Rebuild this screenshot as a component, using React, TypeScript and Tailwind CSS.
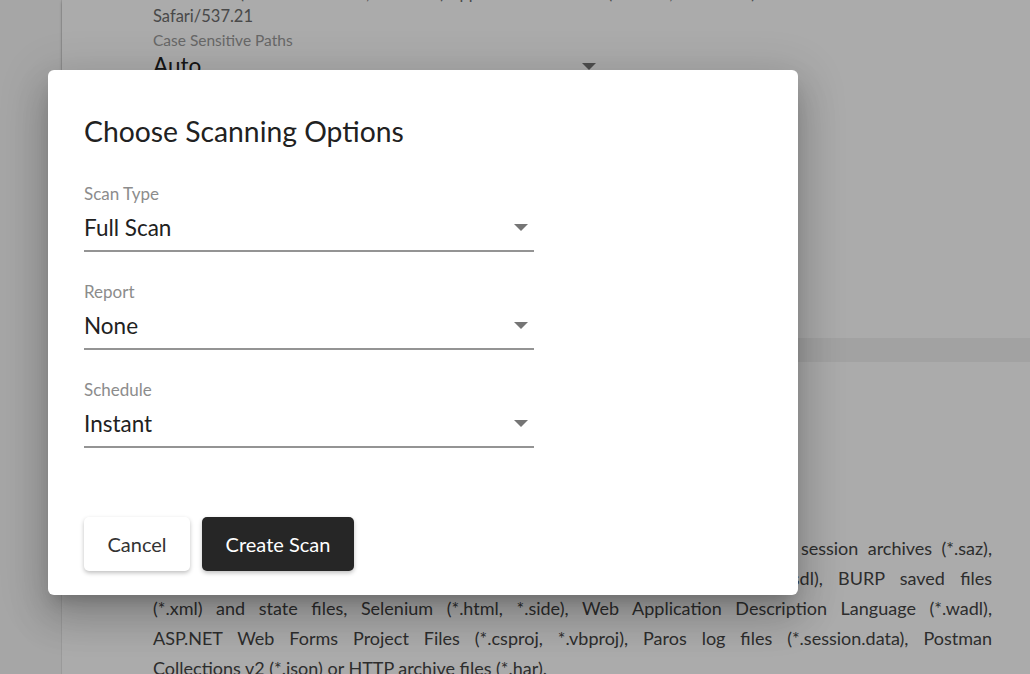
import React from 'react';

const font = { fontFamily: 'Lato, "Noto Sans", sans-serif' };

function SelectField({ label, value }: { label: string; value: string }) {
  return (
    <div className="w-[450px]">
      <div className="text-[17px] leading-[20px] text-[#8c8c8c]">{label}</div>
      <div className="mt-[2px] flex h-[46px] items-center justify-between border-b-2 border-[#949494] pr-[6px]">
        <span className="text-[22.5px] text-[#212121]">{value}</span>
        <svg width="14" height="7" viewBox="0 0 14 7" className="mb-[2px]">
          <path d="M0 0h14L7 7z" fill="#757575" />
        </svg>
      </div>
    </div>
  );
}

function JustLine({ children }: { children: React.ReactNode }) {
  return (
    <div className="whitespace-nowrap text-justify [text-align-last:justify]">{children}</div>
  );
}

export default function App() {
  return (
    <div className="relative h-[674px] w-[1030px] overflow-hidden bg-[#f8f8f8]" style={font}>
      {/* page behind the dialog */}
      <div className="flex h-full">
        <div className="w-[62px] shrink-0 border-r border-[#e6e6e6] bg-[#f8f8f8]" />
        <div className="flex flex-1 flex-col">
          <div className="h-[338px] shrink-0 bg-white pl-[91px] pr-[38px] shadow-[0_2px_3px_rgba(0,0,0,0.25)]">
            <div className="-mt-[18px] text-[16.5px] leading-[23px] text-[#6e6e6e]">
              <div className="whitespace-nowrap">
                Mozilla/5.0 (Windows NT 6.2; WOW64) AppleWebKit/537.21 (KHTML, like Gecko) Chrome/41.0.2228.0
              </div>
              <div>Safari/537.21</div>
            </div>
            <div className="mt-[3px] text-[15.5px] leading-[18px] text-[#9a9a9a]">Case Sensitive Paths</div>
            <div className="mt-[2px] flex h-[30px] w-[450px] items-center justify-between pr-[7px]">
              <span className="text-[22.5px] text-[#212121]">Auto</span>
              <svg width="14" height="7" viewBox="0 0 14 7">
                <path d="M0 0h14L7 7z" fill="#757575" />
              </svg>
            </div>
          </div>
          <div className="h-[24px] shrink-0 bg-[#f2f2f2]" />
          <div className="flex-1 bg-white pl-[91px] pr-[38px] pt-[171px] text-[18px] leading-[30px] text-[#444]">
            <JustLine>Supported formats: Swagger and OpenAPI definitions (*.json, *.yaml), Fiddler session archives (*.saz),</JustLine>
            <JustLine>Burp Suite exports (*.xml), Web Service Definition Language files (*.wsdl), BURP saved files</JustLine>
            <JustLine>(*.xml) and state files, Selenium (*.html, *.side), Web Application Description Language (*.wadl),</JustLine>
            <JustLine>ASP.NET Web Forms Project Files (*.csproj, *.vbproj), Paros log files (*.session.data), Postman</JustLine>
            <div className="whitespace-nowrap">Collections v2 (*.json) or HTTP archive files (*.har).</div>
          </div>
        </div>
      </div>

      {/* overlay + dialog */}
      <div className="absolute inset-0 bg-black/[0.33] pl-[48px] pt-[70px]">
        <div className="flex h-[525px] w-[750px] flex-col rounded-[6px] bg-white px-[36px] pt-[43px] shadow-[0_11px_15px_-7px_rgba(0,0,0,0.2),0_24px_38px_3px_rgba(0,0,0,0.14),0_9px_46px_8px_rgba(0,0,0,0.12)]">
          <h2 className="text-[28.3px] leading-[36px] text-[#212121]">Choose Scanning Options</h2>
          <div className="mt-[35px] flex flex-col gap-[30px]">
            <SelectField label="Scan Type" value="Full Scan" />
            <SelectField label="Report" value="None" />
            <SelectField label="Schedule" value="Instant" />
          </div>
          <div className="mt-[69px] flex gap-[12px]">
            <button className="h-[54px] w-[106px] rounded-[5px] bg-white text-[20px] text-[#333] shadow-[0_2px_4px_rgba(0,0,0,0.25)]">
              Cancel
            </button>
            <button className="h-[54px] w-[152px] rounded-[5px] bg-[#262626] text-[20px] text-white shadow-[0_2px_4px_rgba(0,0,0,0.25)]">
              Create Scan
            </button>
          </div>
        </div>
      </div>
    </div>
  );
}
